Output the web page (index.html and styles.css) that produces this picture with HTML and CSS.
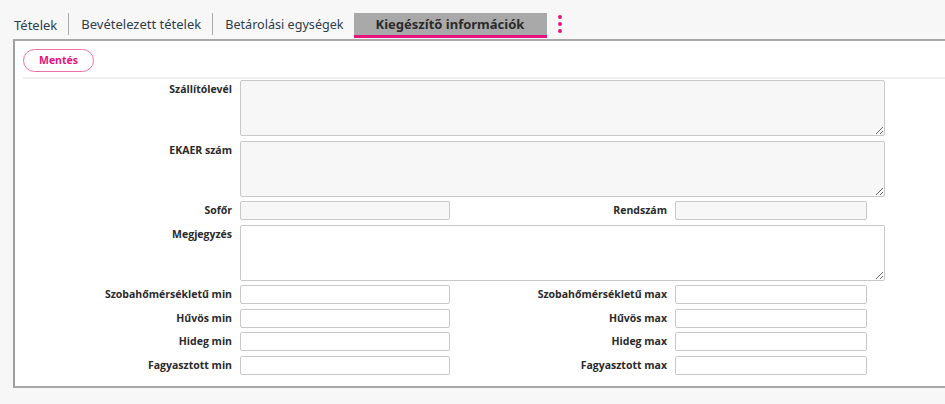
FILE: index.html
```html
<!DOCTYPE html>
<html lang="hu">
<head>
<meta charset="utf-8">
<link rel="stylesheet" href="styles.css">
</head>
<body>
<div class="tabs">
  <div class="tab">Tételek</div>
  <div class="tab sep">Bevételezett tételek</div>
  <div class="tab sep">Betárolási egységek</div>
  <div class="tab active">Kiegészítő információk</div>
  <div class="kebab"><span></span><span></span><span></span></div>
</div>
<div class="panel">
  <div class="toolbar">
    <button class="btn">Mentés</button>
  </div>
  <div class="form">
    <label class="lbl top">Szállítólevél</label>
    <textarea class="ta gray"></textarea>
    <label class="lbl top">EKAER szám</label>
    <textarea class="ta gray"></textarea>
    <label class="lbl">Sofőr</label>
    <input class="in gray w1">
    <label class="lbl">Rendszám</label>
    <input class="in gray w2">
    <label class="lbl top">Megjegyzés</label>
    <textarea class="ta"></textarea>
    <label class="lbl">Szobahőmérsékletű min</label>
    <input class="in w1">
    <label class="lbl">Szobahőmérsékletű max</label>
    <input class="in w2">
    <label class="lbl">Hűvös min</label>
    <input class="in w1">
    <label class="lbl">Hűvös max</label>
    <input class="in w2">
    <label class="lbl">Hideg min</label>
    <input class="in w1">
    <label class="lbl">Hideg max</label>
    <input class="in w2">
    <label class="lbl">Fagyasztott min</label>
    <input class="in w1">
    <label class="lbl">Fagyasztott max</label>
    <input class="in w2">
  </div>
</div>
</body>
</html>
```

FILE: styles.css
```css
html, body {
  margin: 0;
  padding: 0;
  background: #f7f7f7;
}
body {
  font-family: "Open Sans", "Liberation Sans", sans-serif;
  color: #333;
  width: 945px;
  height: 404px;
  overflow: hidden;
}
.tabs {
  display: flex;
  align-items: stretch;
  height: 25px;
  padding-top: 13px;
  padding-left: 3px;
  border-bottom: 1px solid transparent;
}
.tab {
  font-family: "Noto Sans", "Open Sans", sans-serif;
  font-size: 13px;
  color: #2e3d4c;
  padding: 0 11px;
  display: flex;
  align-items: center;
  padding-bottom: 1px;
}
.tab.sep {
  border-left: 1px solid #aaa;
  margin-bottom: 3px;
  padding-bottom: 0;
  padding-left: 12px;
}
.tab.sep:nth-child(3) {
  font-size: 12.6px;
  padding-right: 10px;
}
.tab.active {
  background: #a9a9a9;
  color: #2b2b2b;
  font-weight: bold;
  font-size: 13px;
  padding: 0 23px 0 22px;
  border-bottom: 3px solid #e5157d;
  margin-bottom: 1px;
  box-sizing: border-box;
  height: 25px;
}
.kebab {
  display: flex;
  flex-direction: column;
  gap: 3px;
  padding: 2px 0 0 11px;
}
.kebab span {
  width: 4px;
  height: 4px;
  border-radius: 50%;
  background: #e5157d;
}
.panel {
  margin-left: 13px;
  background: #fff;
  border-left: 2px solid #9e9e9e;
  border-top: 2px solid #a8a8a8;
  border-bottom: 2px solid #a8a8a8;
  height: 349px;
  box-sizing: border-box;
}
.toolbar {
  margin-left: 8px;
  padding-top: 6px;
  height: 38px;
  box-sizing: border-box;
  border-bottom: 2px solid #f0f0f0;
}
.btn {
  width: 71px;
  height: 23px;
  border: 1px solid #ee70aa;
  border-radius: 12px;
  background: #fff;
  color: #e4147c;
  font-family: "Open Sans", sans-serif;
  font-weight: bold;
  font-size: 10.5px;
  padding: 0;
}
.form {
  display: grid;
  grid-template-columns: 217px 210px 209px 192px;
  column-gap: 8px;
  row-gap: 4.5px;
  padding-top: 1px;
  align-items: start;
}
.lbl {
  font-size: 10.5px;
  font-weight: bold;
  color: #2a2a2a;
  text-align: right;
  line-height: 19px;
  white-space: nowrap;
}
.lbl.top { line-height: 17px; padding-top: 1px; }
.ta {
  grid-column: 2 / span 3;
  width: 645px;
  height: 56px;
  box-sizing: border-box;
  border: 1px solid #c8c8c8;
  border-radius: 2px;
  background: #fff;
  margin: 0;
  padding: 0;
  display: block;
}
.in {
  height: 19px;
  box-sizing: border-box;
  border: 1px solid #c8c8c8;
  border-radius: 2px;
  background: #fff;
  padding: 0;
  margin: 0;
  display: block;
}
.gray { background: #f7f7f7; }
.w1 { width: 210px; }
.w2 { width: 192px; }
```
